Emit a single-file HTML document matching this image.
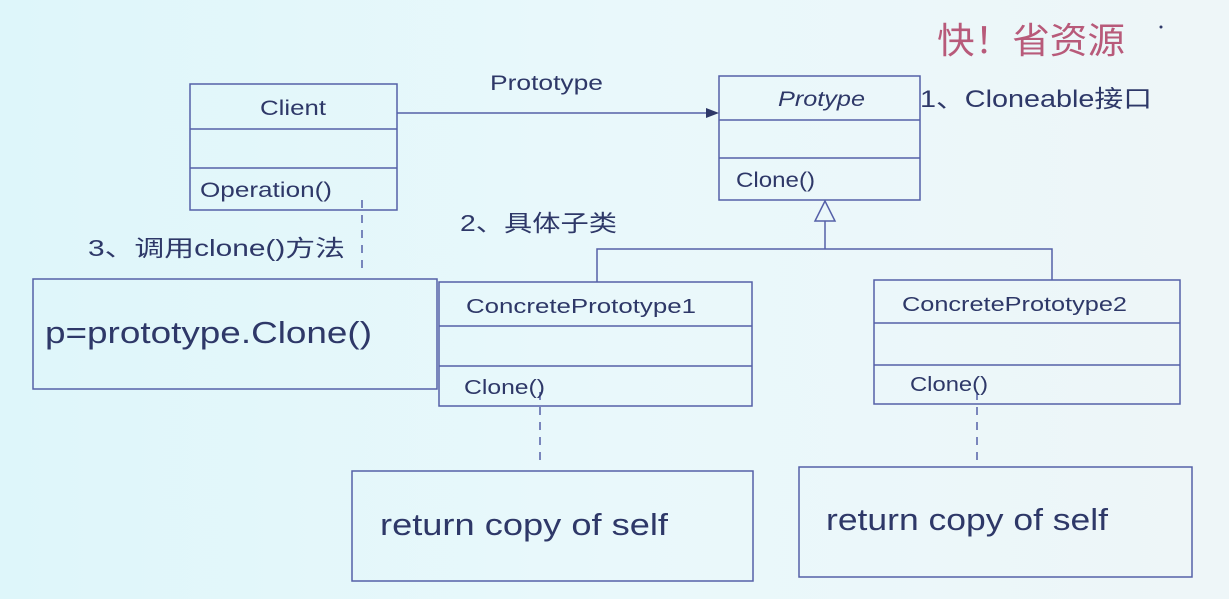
<!DOCTYPE html>
<html><head><meta charset="utf-8"><style>
html,body{margin:0;padding:0;width:1229px;height:599px;overflow:hidden;background:#e6f7fa}
svg{display:block}
text{font-family:"Liberation Sans","Noto Sans CJK SC",sans-serif;fill:#2e3868}
</style></head><body>
<svg width="1229" height="599" viewBox="0 0 1229 599" xmlns="http://www.w3.org/2000/svg">
<defs><linearGradient id="bg" x1="0" y1="0" x2="1" y2="0"><stop offset="0" stop-color="#def6fa"/><stop offset="0.5" stop-color="#e9f8fb"/><stop offset="1" stop-color="#eef6f8"/></linearGradient></defs>
<rect width="1229" height="599" fill="url(#bg)"/>
<g fill="none" stroke="#5560a8" stroke-width="1.5">
<rect x="190" y="84" width="207" height="126"/>
<line x1="190" y1="129" x2="397" y2="129"/><line x1="190" y1="168" x2="397" y2="168"/>
<line x1="397" y1="113" x2="712" y2="113"/>
<rect x="719" y="76" width="201" height="124"/>
<line x1="719" y1="120" x2="920" y2="120"/><line x1="719" y1="158" x2="920" y2="158"/>
<polygon points="825,201 815,221 835,221"/>
<line x1="825" y1="221" x2="825" y2="249"/>
<polyline points="597,282 597,249 1052,249 1052,280"/>
<line x1="362" y1="200" x2="362" y2="270" stroke-dasharray="8,7"/>
<line x1="540" y1="392" x2="540" y2="463" stroke-dasharray="8,7"/>
<line x1="977" y1="392" x2="977" y2="460" stroke-dasharray="8,7"/>
<rect x="33" y="279" width="404" height="110"/>
<rect x="439" y="282" width="313" height="124"/>
<line x1="439" y1="326" x2="752" y2="326"/><line x1="439" y1="366" x2="752" y2="366"/>
<rect x="874" y="280" width="306" height="124"/>
<line x1="874" y1="323" x2="1180" y2="323"/><line x1="874" y1="365" x2="1180" y2="365"/>
<rect x="352" y="471" width="401" height="110"/>
<rect x="799" y="467" width="393" height="110"/>
</g>
<polygon points="719,113 706,108 706,118" fill="#2e3868"/>
<circle cx="1161" cy="27" r="1.5" fill="#2e3868"/>
<g lengthAdjust="spacingAndGlyphs">
<text x="260" y="115" font-size="21" textLength="66" lengthAdjust="spacingAndGlyphs">Client</text>
<text x="200" y="197" font-size="21" textLength="132" lengthAdjust="spacingAndGlyphs">Operation()</text>
<text x="490" y="90" font-size="21" textLength="113" lengthAdjust="spacingAndGlyphs">Prototype</text>
<text x="778" y="106" font-size="21" font-style="italic" textLength="87" lengthAdjust="spacingAndGlyphs">Protype</text>
<text x="736" y="187" font-size="21" textLength="79" lengthAdjust="spacingAndGlyphs">Clone()</text>
<text x="920" y="107" font-size="24" textLength="232" lengthAdjust="spacingAndGlyphs">1、Cloneable接口</text>
<text x="937" y="53" font-size="36" style="fill:#b85a7a" textLength="188" lengthAdjust="spacingAndGlyphs">快！省资源</text>
<text x="460" y="231" font-size="23" textLength="157" lengthAdjust="spacingAndGlyphs">2、具体子类</text>
<text x="88" y="256" font-size="23" textLength="257" lengthAdjust="spacingAndGlyphs">3、调用clone()方法</text>
<text x="45" y="343" font-size="31" textLength="327" lengthAdjust="spacingAndGlyphs">p=prototype.Clone()</text>
<text x="466" y="313" font-size="20" textLength="230" lengthAdjust="spacingAndGlyphs">ConcretePrototype1</text>
<text x="464" y="394" font-size="20" textLength="81" lengthAdjust="spacingAndGlyphs">Clone()</text>
<text x="902" y="311" font-size="20" textLength="225" lengthAdjust="spacingAndGlyphs">ConcretePrototype2</text>
<text x="910" y="391" font-size="20" textLength="78" lengthAdjust="spacingAndGlyphs">Clone()</text>
<text x="380" y="535" font-size="31" textLength="288" lengthAdjust="spacingAndGlyphs">return copy of self</text>
<text x="826" y="530" font-size="31" textLength="282" lengthAdjust="spacingAndGlyphs">return copy of self</text>
</g>
</svg>
</body></html>
